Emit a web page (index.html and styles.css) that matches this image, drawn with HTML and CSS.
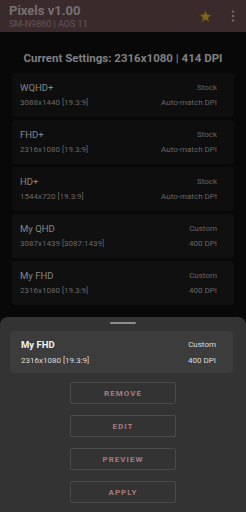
FILE: index.html
```html
<!DOCTYPE html>
<html>
<head>
<meta charset="utf-8">
<link rel="stylesheet" href="styles.css">
</head>
<body>
<div class="app">
  <header class="bar">
    <div class="bar-text">
      <div class="app-title">Pixels v1.00</div>
      <div class="app-sub">SM-N9860 | AOS 11</div>
    </div>
    <svg class="star" width="15" height="15" viewBox="0 0 24 24">
      <path d="M12 2.5l2.9 6.1 6.6.8-4.9 4.6 1.3 6.6L12 17.3l-5.9 3.3 1.3-6.6-4.9-4.6 6.6-.8z" fill="#7d6420" stroke="#4a3a18" stroke-width="1.6" stroke-linejoin="round"/>
    </svg>
    <svg class="dots" width="4" height="14" viewBox="0 0 4 14">
      <circle cx="2" cy="2.5" r="1.2" fill="#6f6666"/>
      <circle cx="2" cy="7" r="1.2" fill="#6f6666"/>
      <circle cx="2" cy="11.5" r="1.2" fill="#6f6666"/>
    </svg>
  </header>
  <main class="main">
    <div class="current">Current Settings: 2316x1080 | 414 DPI</div>
    <div class="list">
      <div class="card">
        <div class="row"><span class="name">WQHD+</span><span class="kind">Stock</span></div>
        <div class="row"><span class="res">3088x1440 [19.3:9]</span><span class="dpi">Auto-match DPI</span></div>
      </div>
      <div class="card">
        <div class="row"><span class="name">FHD+</span><span class="kind">Stock</span></div>
        <div class="row"><span class="res">2316x1080 [19.3:9]</span><span class="dpi">Auto-match DPI</span></div>
      </div>
      <div class="card">
        <div class="row"><span class="name">HD+</span><span class="kind">Stock</span></div>
        <div class="row"><span class="res">1544x720 [19.3:9]</span><span class="dpi">Auto-match DPI</span></div>
      </div>
      <div class="card custom">
        <div class="row"><span class="name">My QHD</span><span class="kind">Custom</span></div>
        <div class="row"><span class="res">3087x1439 [3087:1439]</span><span class="dpi">400 DPI</span></div>
      </div>
      <div class="card custom">
        <div class="row"><span class="name">My FHD</span><span class="kind">Custom</span></div>
        <div class="row"><span class="res">2316x1080 [19.3:9]</span><span class="dpi">400 DPI</span></div>
      </div>
    </div>
  </main>
  <section class="sheet">
    <div class="handle"></div>
    <div class="sel-card">
      <div class="row"><span class="sel-name">My FHD</span><span class="sel-kind">Custom</span></div>
      <div class="row"><span class="sel-res">2316x1080 [19.3:9]</span><span class="sel-dpi">400 DPI</span></div>
    </div>
    <div class="actions">
      <button class="btn">REMOVE</button>
      <button class="btn">EDIT</button>
      <button class="btn">PREVIEW</button>
      <button class="btn">APPLY</button>
    </div>
  </section>
</div>
</body>
</html>
```
FILE: styles.css
```css
* { box-sizing: border-box; }
html, body {
  margin: 0;
  padding: 0;
  background: #080808;
  font-family: Roboto, "Liberation Sans", sans-serif;
}
.app {
  width: 246px;
  height: 512px;
  overflow: hidden;
  display: flex;
  flex-direction: column;
}
.bar {
  height: 32px;
  flex: none;
  background: #3b2a2b;
  display: flex;
  align-items: center;
  padding-left: 9px;
}
.bar-text { flex: 1; display: flex; flex-direction: column; padding-top: 2px; }
.app-title {
  font-size: 13px;
  font-weight: bold;
  color: #767070;
  line-height: 14px;
}
.app-sub {
  font-size: 9px;
  color: #625657;
  line-height: 11px;
  margin-top: 1px;
}
.star { margin-right: 18px; }
.dots { margin-right: 11px; }
.main {
  flex: none;
  display: flex;
  flex-direction: column;
}
.current {
  margin-top: 18px;
  text-align: center;
  font-size: 11.5px;
  font-weight: bold;
  color: #808080;
  line-height: 16px;
}
.list {
  margin: 7px 12px 0 12px;
  display: flex;
  flex-direction: column;
  gap: 3px;
}
.card {
  height: 44px;
  background: #0e0e0e;
  border-radius: 3px;
  padding: 9px 17px 0 8px;
  display: flex;
  flex-direction: column;
  gap: 3px;
}
.card.custom { background: #101010; }
.row {
  display: flex;
  justify-content: space-between;
  align-items: center;
  line-height: 12px;
}
.name { font-size: 9.5px; color: #858585; }
.kind { font-size: 8px; color: #666666; }
.res { font-size: 8px; color: #686868; }
.dpi { font-size: 8px; color: #666666; }
.sheet {
  margin-top: auto;
  height: 195px;
  flex: none;
  background: #333333;
  border-radius: 8px 8px 0 0;
  display: flex;
  flex-direction: column;
}
.handle {
  width: 26px;
  height: 2px;
  background: #8c8c8c;
  margin: 5px auto 0 auto;
  border-radius: 1px;
}
.sel-card {
  margin: 7px 13px 0 10px;
  height: 42px;
  background: #3c3c3c;
  border-radius: 4px;
  padding: 8px 17px 0 11px;
  display: flex;
  flex-direction: column;
  gap: 4px;
}
.sel-name { font-size: 9.5px; font-weight: bold; color: #f2f2f2; }
.sel-kind { font-size: 8px; color: #dcdcdc; }
.sel-res { font-size: 8px; color: #dcdcdc; }
.sel-dpi { font-size: 8px; color: #dcdcdc; }
.actions {
  margin-top: 9px;
  display: flex;
  flex-direction: column;
  align-items: center;
  gap: 11px;
}
.btn {
  width: 106px;
  height: 22px;
  background: transparent;
  border: 1px solid #4a4a4a;
  border-radius: 2px;
  color: #a47c82;
  font-family: Roboto, "Liberation Sans", sans-serif;
  font-size: 8px;
  font-weight: bold;
  letter-spacing: 1px;
  padding: 0;
}
```
